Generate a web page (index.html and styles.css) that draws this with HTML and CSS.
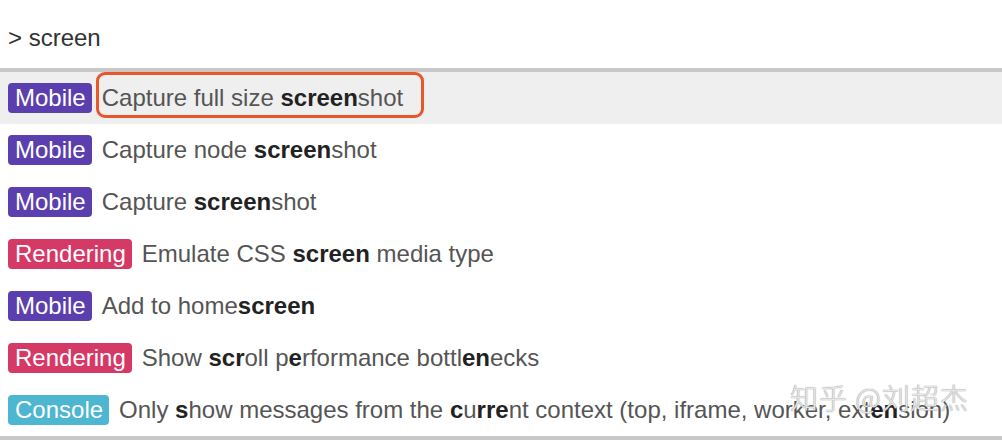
FILE: index.html
```html
<!DOCTYPE html>
<html>
<head>
<meta charset="utf-8">
<link rel="stylesheet" href="styles.css">
</head>
<body>
<div class="palette">
  <div class="prompt">&gt; screen</div>
  <div class="list">
    <div class="row selected"><span class="badge mobile">Mobile</span><span class="title annotated">Capture full size <b>screen</b>shot</span></div>
    <div class="row"><span class="badge mobile">Mobile</span><span class="title">Capture node <b>screen</b>shot</span></div>
    <div class="row"><span class="badge mobile">Mobile</span><span class="title">Capture <b>screen</b>shot</span></div>
    <div class="row"><span class="badge rendering">Rendering</span><span class="title">Emulate CSS <b>screen</b> media type</span></div>
    <div class="row"><span class="badge mobile">Mobile</span><span class="title">Add to home<b>screen</b></span></div>
    <div class="row"><span class="badge rendering">Rendering</span><span class="title">Show <b>scr</b>oll p<b>e</b>rformance bottl<b>en</b>ecks</span></div>
    <div class="row"><span class="badge console">Console</span><span class="title">Only <b>s</b>how messages from the <b>c</b>u<b>rre</b>nt context (top, iframe, worker, ext<b>en</b>sion)</span></div>
  </div>
  <div class="watermark">知乎 @刘超杰</div>
</div>
</body>
</html>
```
FILE: styles.css
```css
html, body {
  margin: 0;
  padding: 0;
  background: #fff;
}
body {
  width: 1002px;
  height: 440px;
  overflow: hidden;
  font-family: "Liberation Sans", Arial, "Noto Sans CJK SC", sans-serif;
  font-size: 24px;
  line-height: 30px;
}
.palette {
  position: relative;
  height: 440px;
}
.prompt {
  height: 45px;
  padding: 23px 0 0 8px;
  color: #333;
  border-bottom: 4px solid #c8c8c8;
}
.list {
  border-bottom: 4px solid #c8c8c8;
}
.row {
  height: 52px;
  display: flex;
  align-items: center;
  padding-left: 8px;
  white-space: nowrap;
}
.row.selected {
  background: #efefef;
}
.badge {
  color: #fff;
  padding: 0 6px 0 7px;
  border-radius: 4px;
  margin-right: 10px;
  line-height: 30px;
}
.mobile { background: #5b3fae; }
.rendering { background: #d53966; }
.console { background: #4db6d1; }
.title {
  color: #555;
}
.title b {
  color: #222;
  font-weight: bold;
}
.annotated {
  position: relative;
}
.annotated::after {
  content: "";
  position: absolute;
  left: -6px;
  right: -21px;
  top: -11px;
  bottom: -5px;
  border: 3px solid #e8562c;
  border-radius: 9px;
}
.watermark {
  position: absolute;
  left: 790px;
  top: 382px;
  font-size: 28px;
  letter-spacing: 1px;
  color: rgba(255, 255, 255, 0.75);
  text-shadow: 0 0 1px #999, 0 0 1px #999;
  font-family: "Noto Sans CJK SC", "Liberation Sans", sans-serif;
  font-weight: 300;
}
```
